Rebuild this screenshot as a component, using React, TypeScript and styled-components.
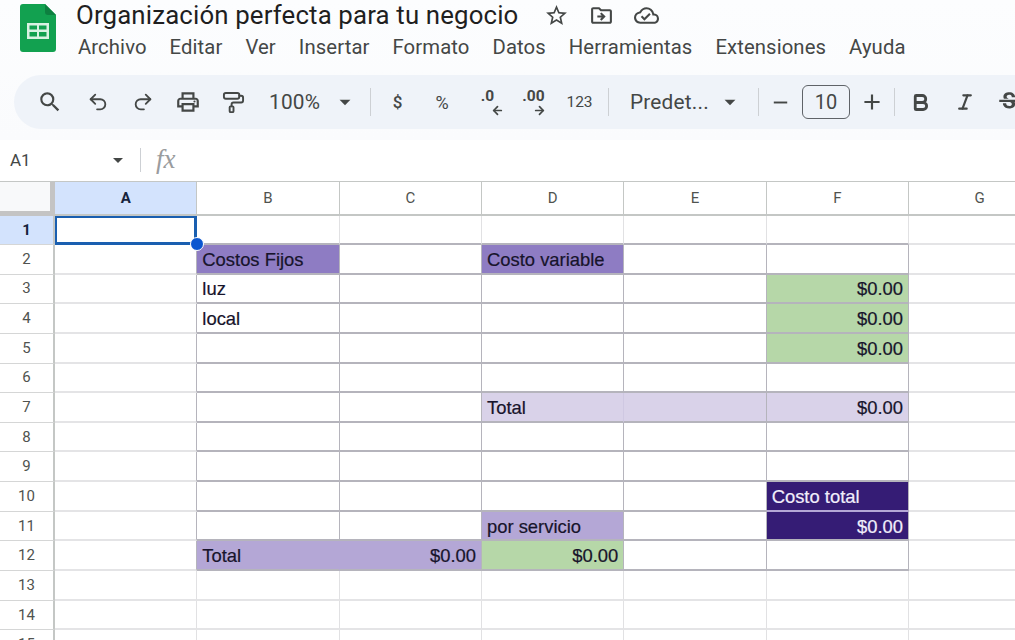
import { Fragment } from 'react'
import styled, { createGlobalStyle } from 'styled-components'
import { ArrowLeft, ArrowRight, Bold, Italic, PaintRoller, Redo2, Undo2 } from 'lucide-react'
import {
  MdAdd,
  MdArrowDropDown,
  MdOutlineCloudDone,
  MdOutlineDriveFileMove,
  MdOutlineLocalPrintshop,
  MdRemove,
  MdSearch,
  MdStarBorder,
  MdStrikethroughS,
} from 'react-icons/md'

const GlobalStyle = createGlobalStyle`
  html, body {
    margin: 0;
    height: 100%;
    overflow: hidden;
    background: #fff;
  }
  * {
    box-sizing: border-box;
  }
`

const Page = styled.div`
  width: 1015px;
  height: 640px;
  overflow: hidden;
  font-family: Roboto, 'Liberation Sans', sans-serif;
  color: #444746;
  background: #fff;
`

const TopArea = styled.div`
  height: 140px;
  background: linear-gradient(#fcfdfe, #fafbfd);
  overflow: hidden;
`

const TitleBar = styled.div`
  display: flex;
  height: 75px;
  padding: 4px 0 0 20px;
`

const TitleColumn = styled.div`
  margin-left: 20px;
`

const TitleRow = styled.div`
  display: flex;
  align-items: center;
  height: 22px;
`

const Title = styled.div`
  font-size: 25.8px;
  line-height: 22px;
  color: #1f1f1f;
  letter-spacing: 0.15px;
  white-space: nowrap;
`

const TitleIcons = styled.div`
  display: flex;
  align-items: center;
  gap: 20px;
  margin-left: 26px;
  color: #444746;
`

const Menu = styled.div`
  display: flex;
  gap: 23px;
  margin: 9px 0 0 2px;
  font-size: 20.3px;
  line-height: 24px;
  letter-spacing: 0.1px;
  color: #444746;
  white-space: nowrap;
`

const Toolbar = styled.div`
  display: flex;
  align-items: center;
  width: 1040px;
  height: 54px;
  margin-left: 14px;
  padding-left: 12px;
  border-radius: 27px;
  background: #eff3f9;
  color: #444746;
`

const Slot = styled.div<{ $w: number }>`
  display: flex;
  align-items: center;
  justify-content: center;
  flex: none;
  width: ${({ $w }) => $w}px;
  height: 34px;
`

const DropText = styled.div<{ $w: number; $pad: number }>`
  display: flex;
  align-items: center;
  flex: none;
  width: ${({ $w }) => $w}px;
  padding-left: ${({ $pad }) => $pad}px;
  font-size: 20.8px;
  letter-spacing: 0.2px;
  color: #444746;
`

const Caret = styled(MdArrowDropDown)`
  flex: none;
  margin-left: auto;
`

const Separator = styled.div`
  flex: none;
  width: 1px;
  height: 28px;
  background: #cdd0d4;
`

const SymbolText = styled.span<{ $size: number; $weight: number }>`
  font-size: ${({ $size }) => $size}px;
  font-weight: ${({ $weight }) => $weight};
  color: #444746;
`

const DecimalIcon = styled.div<{ $overhang: number }>`
  display: flex;
  flex-direction: column;
  align-items: flex-end;
  margin-top: 2px;
  font-size: 15.5px;
  font-weight: 700;
  line-height: 14px;
  color: #444746;

  svg {
    margin-top: 1px;
    margin-right: ${({ $overhang }) => -$overhang}px;
  }
`

const SizeBox = styled.div`
  display: flex;
  align-items: center;
  justify-content: center;
  flex: none;
  width: 48px;
  height: 34px;
  border: 1.5px solid #5f6368;
  border-radius: 6px;
  font-size: 20px;
  color: #444746;
`

const FormulaBar = styled.div`
  display: flex;
  align-items: center;
  height: 41px;
  padding: 0 0 2px 10px;
  background: #fff;
`

const NameBox = styled.div`
  display: flex;
  align-items: center;
  width: 120px;
  font-size: 17px;
  color: #444746;
`

const FormulaSeparator = styled(Separator)`
  height: 24px;
  margin-left: 10px;
`

const Fx = styled.span`
  margin-left: 15px;
  font-family: 'Liberation Serif', serif;
  font-size: 27px;
  font-style: italic;
  color: #9a9c9e;
`

const Sheet = styled.div`
  display: grid;
  grid-template-columns: 55px repeat(7, 142.33px);
  grid-template-rows: 34px 29px repeat(14, 29.65px);
  width: 1051px;
  border-top: 1px solid #c4c7c5;
`

const Corner = styled.div`
  background: #f8f9fa;
  border-right: 5px solid #c4c4c4;
  border-bottom: 5px solid #c4c4c4;
`

const ColHead = styled.div<{ $active: boolean }>`
  display: flex;
  align-items: center;
  justify-content: center;
  background: ${({ $active }) => ($active ? '#d3e3fd' : '#fff')};
  border-right: 1px solid #c4c7c5;
  border-bottom: 2px solid #c4c7c5;
  font-size: 15px;
  font-weight: ${({ $active }) => ($active ? 700 : 400)};
  color: ${({ $active }) => ($active ? '#16233c' : '#50534f')};
`

const RowHead = styled.div<{ $active: boolean }>`
  display: flex;
  align-items: center;
  justify-content: center;
  padding-bottom: 1px;
  background: ${({ $active }) => ($active ? '#d3e3fd' : '#fff')};
  border-right: 2px solid #c4c7c5;
  border-bottom: 1px solid #d5d6d6;
  font-size: 15px;
  font-weight: ${({ $active }) => ($active ? 700 : 400)};
  color: ${({ $active }) => ($active ? '#16233c' : '#50534f')};
`

const Cell = styled.div<{
  $fill?: string
  $right?: boolean
  $color?: string
  $strongR: boolean
  $strongB: boolean
  $edgeR?: string
  $edgeB?: string
}>`
  display: flex;
  align-items: center;
  justify-content: ${({ $right }) => ($right ? 'flex-end' : 'flex-start')};
  padding: 2px 5px 0;
  background: ${({ $fill }) => $fill ?? '#fff'};
  border-right: 1px solid
    ${({ $strongR, $edgeR }) => $edgeR ?? ($strongR ? '#b5b4bc' : '#e1e1e3')};
  border-bottom: 2px solid
    ${({ $strongB, $edgeB }) => $edgeB ?? ($strongB ? '#b5b4bc' : '#e4e4e6')};
  font-family: 'Liberation Sans', Arial, sans-serif;
  font-size: 18.4px;
  -webkit-text-stroke: 0.2px currentColor;
  color: ${({ $color }) => $color ?? '#17142b'};
  white-space: nowrap;
`

const SelectedCell = styled.div`
  position: relative;
  background: #fff;
  border: 2px solid #1a5fb0;
  border-width: 2px 3px 3px 2px;
`

const FillHandle = styled.span`
  position: absolute;
  right: -10px;
  bottom: -9px;
  width: 14px;
  height: 14px;
  border: 1.5px solid #fff;
  border-radius: 50%;
  background: #0b57d0;
`

interface CellData {
  text?: string
  fill?: string
  right?: boolean
  color?: string
  edgeR?: string
  edgeB?: string
}

const PURPLE = '#8e7cc3'
const LAVENDER = '#b4a7d6'
const PALE = '#d9d2e9'
const GREEN = '#b6d7a8'
const NAVY = '#351c75'

const columns = ['A', 'B', 'C', 'D', 'E', 'F', 'G']

// key = row number + column letter
const cells: Record<string, CellData> = {
  '2B': { text: 'Costos Fijos', fill: PURPLE },
  '2D': { text: 'Costo variable', fill: PURPLE },
  '3B': { text: 'luz' },
  '4B': { text: 'local' },
  '3F': { text: '$0.00', fill: GREEN, right: true },
  '4F': { text: '$0.00', fill: GREEN, right: true },
  '5F': { text: '$0.00', fill: GREEN, right: true },
  '7D': { text: 'Total', fill: PALE, edgeR: '#cfc8e2' },
  '7E': { fill: PALE },
  '7F': { text: '$0.00', fill: PALE, right: true },
  '10F': { text: 'Costo total', fill: NAVY, color: '#f1eefb', edgeB: LAVENDER },
  '11D': { text: 'por servicio', fill: LAVENDER },
  '11F': { text: '$0.00', fill: NAVY, color: '#f1eefb', right: true },
  '12B': { text: 'Total', fill: LAVENDER, edgeR: LAVENDER },
  '12C': { text: '$0.00', fill: LAVENDER, right: true },
  '12D': { text: '$0.00', fill: GREEN, right: true },
}

const rows = Array.from({ length: 15 }, (_, i) => i + 1)

const SheetsLogo = () => (
  <svg width="36" height="48" viewBox="0 0 36 48">
    <path
      d="M3 0h22l11 11v34a3 3 0 0 1-3 3H3a3 3 0 0 1-3-3V3a3 3 0 0 1 3-3z"
      fill="#12a150"
    />
    <path d="M25 0l11 11h-8a3 3 0 0 1-3-3z" fill="#0d8040" />
    <path
      d="M7 19h22v16H7z M9.500 21.500v4h7.500v-4z M19 21.500v4h7.500v-4z M9.500 28v4.500h7.500V28z M19 28v4.500h7.500V28z"
      fill="#d9f2e3"
      fillRule="evenodd"
    />
  </svg>
)

const App = () => {
  return (
    <Page>
      <GlobalStyle />
      <TopArea>
        <TitleBar>
          <SheetsLogo />
          <TitleColumn>
            <TitleRow>
              <Title>Organización perfecta para tu negocio</Title>
              <TitleIcons>
                <MdStarBorder size={25} />
                <MdOutlineDriveFileMove size={25} />
                <MdOutlineCloudDone size={25} />
              </TitleIcons>
            </TitleRow>
            <Menu>
              {['Archivo', 'Editar', 'Ver', 'Insertar', 'Formato', 'Datos', 'Herramientas', 'Extensiones', 'Ayuda'].map(
                (item) => (
                  <span key={item}>{item}</span>
                ),
              )}
            </Menu>
          </TitleColumn>
        </TitleBar>
        <Toolbar>
          <Slot $w={48}><MdSearch size={26} /></Slot>
          <Slot $w={48}><Undo2 size={22} strokeWidth={2} /></Slot>
          <Slot $w={42}><Redo2 size={22} strokeWidth={2} /></Slot>
          <Slot $w={48}><MdOutlineLocalPrintshop size={26} /></Slot>
          <Slot $w={42}><PaintRoller size={23} strokeWidth={2} /></Slot>
          <DropText $w={104} $pad={15}>
            100%
            <Caret size={26} />
          </DropText>
          <Slot $w={12} />
          <Separator />
          <Slot $w={53}><SymbolText $size={17} $weight={500}>$</SymbolText></Slot>
          <Slot $w={36}><SymbolText $size={18} $weight={400}>%</SymbolText></Slot>
          <Slot $w={55}>
            <DecimalIcon $overhang={10}>.0<ArrowLeft size={13} strokeWidth={3.2} /></DecimalIcon>
          </Slot>
          <Slot $w={37}>
            <DecimalIcon $overhang={1}>.00<ArrowRight size={13} strokeWidth={3.2} /></DecimalIcon>
          </Slot>
          <Slot $w={55}><SymbolText $size={15.5} $weight={400}>123</SymbolText></Slot>
          <Slot $w={1} />
          <Separator />
          <DropText $w={134} $pad={21}>
            Predet...
            <Caret size={26} />
          </DropText>
          <Slot $w={15} />
          <Separator />
          <Slot $w={43}><MdRemove size={23} /></Slot>
          <SizeBox>10</SizeBox>
          <Slot $w={43}><MdAdd size={26} /></Slot>
          <Slot $w={1} />
          <Separator />
          <Slot $w={50}><Bold size={21} strokeWidth={3.2} /></Slot>
          <Slot $w={40}><Italic size={20} strokeWidth={2.6} /></Slot>
          <Slot $w={48}><MdStrikethroughS size={26} /></Slot>
        </Toolbar>
      </TopArea>
      <FormulaBar>
        <NameBox>
          A1
          <Caret size={24} />
        </NameBox>
        <FormulaSeparator />
        <Fx>fx</Fx>
      </FormulaBar>
      <Sheet>
        <Corner />
        {columns.map((col) => (
          <ColHead key={col} $active={col === 'A'}>{col}</ColHead>
        ))}
        {rows.map((row) => (
          <Fragment key={row}>
            <RowHead $active={row === 1}>{row}</RowHead>
            {columns.map((col, c) => {
              if (row === 1 && col === 'A') {
                return (
                  <SelectedCell key={col}>
                    <FillHandle />
                  </SelectedCell>
                )
              }
              const data = cells[`${row}${col}`] ?? {}
              const strongR = row >= 2 && row <= 12 && c <= 5
              const strongB = row <= 12 && c >= 1 && c <= 5
              return (
                <Cell
                  key={col}
                  $fill={data.fill}
                  $right={data.right}
                  $color={data.color}
                  $strongR={strongR}
                  $strongB={strongB}
                  $edgeR={data.edgeR}
                  $edgeB={data.edgeB}
                >
                  {data.text}
                </Cell>
              )
            })}
          </Fragment>
        ))}
      </Sheet>
    </Page>
  )
}

export default App
